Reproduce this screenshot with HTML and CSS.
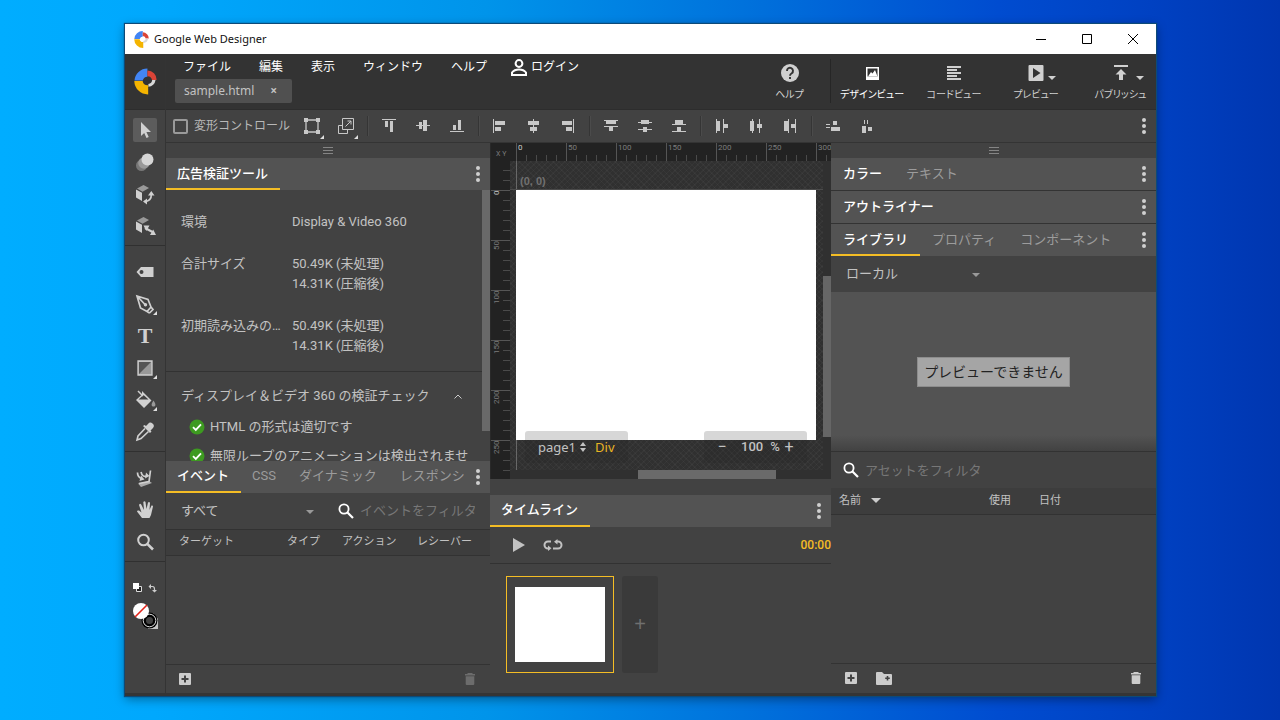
FILE: index.html
```html
<!DOCTYPE html>
<html lang="ja">
<head>
<meta charset="utf-8">
<title>Google Web Designer</title>
<link rel="stylesheet" href="styles.css">
</head>
<body>
<svg class="defs" aria-hidden="true">
  <symbol id="logo" viewBox="0 0 24 27">
    <path fill="#4285f4" d="M.5 12.500A13.500 13.500 0 0 1 14 0v8.500a5 5 0 0 0-4.800 4z"/>
    <path fill="#db4437" d="M14 2a9.500 9.500 0 0 1 9.500 10h-4.700A4.800 4.800 0 0 0 14 8z"/>
    <path fill="#d8d8d8" d="M22.500 12a8 8 0 0 1-7.500 7v-3a4.500 4.500 0 0 0 4-4z"/>
    <path fill="#f4b400" d="M.3 13H9a5.500 5.500 0 0 0 5.800 4.500V27A14.300 14.300 0 0 1 .3 13z"/>
  </symbol>
  <symbol id="more" viewBox="0 0 4 16"><circle cx="2" cy="2" r="2"/><circle cx="2" cy="8" r="2"/><circle cx="2" cy="14" r="2"/></symbol>
  <symbol id="grip" viewBox="0 0 10 7"><path d="M0 0h10v1H0zM0 3h10v1H0zM0 6h10v1H0z"/></symbol>
  <symbol id="search" viewBox="0 0 16 16"><circle cx="6" cy="6" r="4.600" fill="none" stroke="currentColor" stroke-width="1.800"/><path d="M9.500 9.500L15 15" stroke="currentColor" stroke-width="2.200"/></symbol>
  <symbol id="add" viewBox="0 0 12 12"><path fill-rule="evenodd" d="M1 0h10a1 1 0 0 1 1 1v10a1 1 0 0 1-1 1H1a1 1 0 0 1-1-1V1a1 1 0 0 1 1-1zm4 2.500V5H2.500v2H5v2.500h2V7h2.500V5H7V2.500z"/></symbol>
  <symbol id="trash" viewBox="0 0 10 12"><path d="M3 0h4l1 1h2v1.500H0V1h2zM.7 3.300h8.600V11a1 1 0 0 1-1 1H1.700a1 1 0 0 1-1-1z"/></symbol>
  <symbol id="check" viewBox="0 0 16 16"><circle cx="8" cy="8" r="7.500" fill="#3d9a20"/><path d="M4 8.200l2.800 2.700L12 5.300" fill="none" stroke="#fff" stroke-width="1.800"/></symbol>
  <symbol id="a-top" viewBox="0 0 14 14"><path d="M0 0h14v1H0zM3 2h3v6H3zM8 2h3v11H8z"/></symbol>
  <symbol id="a-mid" viewBox="0 0 14 14"><path d="M0 6h14v1H0zM3 3h3v7H3zM7 1h4v11H7z"/></symbol>
  <symbol id="a-bot" viewBox="0 0 14 14"><path d="M0 12h14v1H0zM3 6h3v5H3zM8 1h3v10H8z"/></symbol>
  <symbol id="a-left" viewBox="0 0 14 14"><path d="M0 0h1v14H0zM2 2h10v4H2zM2 8h6v4H2z"/></symbol>
  <symbol id="a-cen" viewBox="0 0 14 14"><path d="M6 0h1v14H6zM1 2h11v4H1zM3 8h7v4H3z"/></symbol>
  <symbol id="a-right" viewBox="0 0 14 14"><path d="M12 0h1v14h-1zM1 2h10v4H1zM5 8h6v4H5z"/></symbol>
  <symbol id="d-top" viewBox="0 0 14 14"><path d="M0 1h14v1H0zM2 1h10v4H2zM0 7h14v1H0zM5 7h4v5H5z"/></symbol>
  <symbol id="d-mid" viewBox="0 0 14 14"><path d="M0 3h14v1H0zM3 1h8v4H3zM0 10h14v1H0zM5 8h4v5H5z"/></symbol>
  <symbol id="d-bot" viewBox="0 0 14 14"><path d="M0 5h14v1H0zM3 1h8v4H3zM0 12h14v1H0zM5 8h4v4H5z"/></symbol>
  <symbol id="d-left" viewBox="0 0 14 14"><path d="M1 0h1v14H1zM1 2h4v10H1zM8 0h1v14H8zM8 5h5v4H8z"/></symbol>
  <symbol id="d-cen" viewBox="0 0 14 14"><path d="M3 0h1v14H3zM1 2h4v10H1zM10 0h1v14h-1zM8 5h5v4H8z"/></symbol>
  <symbol id="d-right" viewBox="0 0 14 14"><path d="M5 0h1v14H5zM1 2h4v10H1zM12 0h1v14h-1zM8 5h4v4H8z"/></symbol>
  <symbol id="s-ver" viewBox="0 0 14 14"><path d="M0 5h4v1H0zM0 8h4v1H0zM7 2h4v4H7zM5 8h9v4H5z"/></symbol>
  <symbol id="s-hor" viewBox="0 0 14 14"><path d="M4 1h1v4H4zM7 1h1v4H7zM2 7h4v7H2zM8 8h4v4H8z"/></symbol>
</svg>
<div class="desktop">
<main class="window">
  <header class="titlebar">
    <svg class="title-logo"><use href="#logo"/></svg>
    <span class="title">Google Web Designer</span>
    <div class="win-buttons">
      <button aria-label="最小化"><svg viewBox="0 0 12 12"><path d="M1 6.500h10"/></svg></button>
      <button aria-label="最大化"><svg viewBox="0 0 12 12"><path d="M1.500 1.500h9v9h-9z"/></svg></button>
      <button aria-label="閉じる"><svg viewBox="0 0 12 12"><path d="M1 1l10 10M11 1L1 11"/></svg></button>
    </div>
  </header>
  <div class="app">
    <aside class="side">
      <div class="brand"><svg><use href="#logo"/></svg></div>
      <div class="tools">
        <button class="active" aria-label="選択"><svg viewBox="0 0 24 24"><path d="M8 4v14l3.200-3 2.300 5 2.200-1-2.300-5H18z"/></svg></button>
        <button aria-label="モーション"><svg viewBox="0 0 24 24"><circle cx="8.500" cy="15.500" r="5.500" fill="#777"/><circle cx="11" cy="13" r="5.800" fill="#999"/><circle cx="14.500" cy="9.500" r="6" fill="#d6d6d6"/></svg></button>
        <button aria-label="3D 回転"><svg viewBox="0 0 24 24"><path fill="#999" d="M4 6.500L10.500 3 16 6l-6.500 3.700z"/><path d="M3 7.500l6 3.200V19l-6-3.500z"/><path d="M11.500 19.500c4.500 0 7-2.500 6.800-7" fill="none" stroke="currentColor" stroke-width="1.700"/><path d="M18.300 9l3.200 4.500h-6.500zM14 16.500v6l-4-3z"/></svg></button>
        <button aria-label="3D 移動"><svg viewBox="0 0 24 24"><path fill="#999" d="M4 6.500L10.500 3 16 6l-6.500 3.700z"/><path d="M3 7.500l6 3.200V19l-6-3.500z"/><path d="M12 14l8.500 4.500" stroke="currentColor" stroke-width="2"/><path d="M10.500 11.500h6l-3.200 5.500zM23 21h-6l3.200-5.500z"/></svg></button>
      </div>
      <div class="tools">
        <button aria-label="タグ"><svg viewBox="0 0 24 24"><path fill-rule="evenodd" d="M8 7h12.500v10H8l-4.500-5zM8.500 10a2 2 0 1 0 0 4 2 2 0 0 0 0-4z"/></svg></button>
        <button class="sub" aria-label="ペン"><svg viewBox="0 0 24 24"><path d="M4 4l11 3.500 3 7.500-4 4.500-6.500-3.500zM5 5l7 7.500M14 19.500l2.500 1.500M18 15l2 2.500-3.500 3.500" fill="none" stroke="currentColor" stroke-width="1.700"/><circle cx="12.500" cy="12.800" r="1.700"/></svg></button>
        <button class="glyph" aria-label="テキスト">T</button>
        <button class="sub" aria-label="図形"><svg viewBox="0 0 24 24"><path fill="#999" d="M5 5h14v14H5z"/><path fill="#555" d="M6 6h12L6 18z"/><path d="M5 5h14v14H5z" fill="none" stroke="currentColor" stroke-width="1.300"/></svg></button>
        <button class="sub" aria-label="塗りつぶし"><svg viewBox="0 0 24 24"><path d="M9 3l9.500 9.500-7.500 7.500L3 12l6-5.500zM5.500 11.500h10L10.500 7z" fill-rule="evenodd"/><path d="M5 3l5 5" stroke="currentColor" stroke-width="1.500"/><path fill="#999" d="M20.500 12.500c3 4 2 6 0 6s-3-2 0-6z"/></svg></button>
        <button aria-label="スポイト"><svg viewBox="0 0 24 24"><path d="M13 6l2-2a3 3 0 0 1 5 4l-2.500 2.500 1 1-1.500 1.500-7-7L11.500 5z"/><path d="M12 8.500l-7 7.500L4 20l4-1.500 7.500-7" fill="none" stroke="currentColor" stroke-width="1.600"/></svg></button>
      </div>
      <div class="tools">
        <button aria-label="3D ステージ回転"><svg viewBox="0 0 24 24"><path fill="#aaa" d="M5 17.500l11-2.500 3 2-11 4z"/><path d="M17.500 4.500l-1.500 11-10 2M4.500 6.500c0 3 1 5 4 6M8 6c1 4 3 5 6 4" fill="none" stroke="currentColor" stroke-width="1.700"/><path d="M8 9.500l3.500 4-5 1.500zM13 6.500l3.500 3.500-4.500 2.500z"/></svg></button>
        <button aria-label="手のひら"><svg viewBox="0 0 24 24"><path d="M9 20L4 13.500q0-1.500 2-1l2.500 2L6 7q1-2 2.200-.5L11 12 10.300 4q1.300-1.500 2.200 0L13.500 11l1.500-6.500q1.500-1 2 .5L16.500 12l2-4.500q1.500-.5 1.500 1L18 17l-1.500 3z"/></svg></button>
        <button aria-label="ズーム"><svg viewBox="0 0 24 24"><circle cx="10.500" cy="10" r="5.300" fill="none" stroke="currentColor" stroke-width="2"/><path d="M14.300 13.800l5.700 5.700" stroke="currentColor" stroke-width="2.600"/></svg></button>
      </div>
      <div class="swatches">
        <svg viewBox="0 0 26 48"><path fill="#222" stroke="#ddd" d="M4.500 4.500h5v5h-5z"/><path fill="#fff" d="M1 1h6v6H1z"/><path d="M18 4.500h2.500q2 0 2 2.500v1.500" fill="none" stroke="#ccc" stroke-width="1.200"/><path fill="#ccc" d="M19 2v5l-2.500-2.500zM20 8h5l-2.500 2.500z"/><path fill="#c4c4c4" d="M21 31l5 6v10H16z"/><circle cx="17.500" cy="38.500" r="8" fill="#000"/><circle cx="17.500" cy="38.500" r="6.300" fill="none" stroke="#ddd"/><circle cx="17.500" cy="38.500" r="3.500" fill="#424242"/><circle cx="9" cy="29" r="8" fill="#fff"/><path d="M3 35L15 23" stroke="#e2231a" stroke-width="1.600"/></svg>
      </div>
    </aside>
    <div class="main">
      <div class="header">
        <div class="header-left">
          <nav class="menu">
            <button>ファイル</button><button>編集</button><button>表示</button><button>ウィンドウ</button><button>ヘルプ</button>
            <button class="login"><svg viewBox="0 0 16 17"><circle cx="8" cy="4.500" r="3.400"/><path d="M1 16v-2.500C2.500 11.500 5 10.500 8 10.500s5.500 1 7 3V16z"/></svg>ログイン</button>
          </nav>
          <div class="file-tab"><span>sample.html</span><button aria-label="閉じる">×</button></div>
        </div>
        <div class="actions">
          <button class="act-help"><svg viewBox="0 0 20 20"><circle cx="10" cy="10" r="9"/><path d="M7 8a3 3 0 1 1 4.800 2.200Q10 11.300 10 12.700M10 14v2" fill="none" stroke="#333" stroke-width="1.900"/></svg>ヘルプ</button>
          <button class="act on"><svg viewBox="0 0 20 20"><path d="M4 4h13v13H4z"/><path fill="#333" d="M5.500 5.500h10v8h-10z"/><path d="M6 13.500l3-4.500 1.500 1.500L13 7l2.500 6.500z"/></svg>デザインビュー</button>
          <button class="act"><svg viewBox="0 0 20 20"><path d="M3 3h14v2H3zM3 6h10v2H3zM3 9h14v2H3zM3 12h10v2H3zM3 15h14v2H3z"/></svg>コードビュー</button>
          <button class="act drop"><svg viewBox="0 0 20 20"><path fill-rule="evenodd" d="M3.500 2h13q1 0 1 1v14q0 1-1 1h-13q-1 0-1-1V3q0-1 1-1zM7 5v10l7.500-5z"/></svg>プレビュー</button>
          <button class="act drop"><svg viewBox="0 0 20 20"><path d="M3 2h14v2H3zM10 6l5.500 5.500H12V17H8v-5.500H4.500z"/></svg>パブリッシュ</button>
        </div>
      </div>
      <div class="toolbar">
        <label class="transform"><input type="checkbox">変形コントロール</label>
        <div class="group">
          <button class="sub" aria-label="枠"><svg class="i18" viewBox="0 0 18 18"><path d="M3 3h12v12H3z" fill="none" stroke="currentColor" stroke-width="1.300"/><path d="M1 1h4v4H1zM13 1h4v4h-4zM1 13h4v4H1zM13 13h4v4h-4z"/></svg></button>
          <button class="sub" aria-label="拡大"><svg class="i18" viewBox="0 0 18 18"><path d="M5.500 1.500h11v11h-11zM5.500 8.500h-4v8h9v-4M8.500 9.500L14 4M10.500 4H14v3.500" fill="none" stroke="currentColor"/></svg></button>
        </div>
        <div class="group">
          <button aria-label="上揃え"><svg><use href="#a-top"/></svg></button><button aria-label="上下中央"><svg><use href="#a-mid"/></svg></button><button aria-label="下揃え"><svg><use href="#a-bot"/></svg></button>
        </div>
        <div class="group">
          <button aria-label="左揃え"><svg><use href="#a-left"/></svg></button><button aria-label="左右中央"><svg><use href="#a-cen"/></svg></button><button aria-label="右揃え"><svg><use href="#a-right"/></svg></button>
        </div>
        <div class="group">
          <button aria-label="上端分布"><svg><use href="#d-top"/></svg></button><button aria-label="上下分布"><svg><use href="#d-mid"/></svg></button><button aria-label="下端分布"><svg><use href="#d-bot"/></svg></button>
        </div>
        <div class="group">
          <button aria-label="左端分布"><svg><use href="#d-left"/></svg></button><button aria-label="左右分布"><svg><use href="#d-cen"/></svg></button><button aria-label="右端分布"><svg><use href="#d-right"/></svg></button>
        </div>
        <div class="group">
          <button aria-label="縦の間隔"><svg><use href="#s-ver"/></svg></button><button aria-label="横の間隔"><svg><use href="#s-hor"/></svg></button>
        </div>
        <button class="more" aria-label="その他"><svg><use href="#more"/></svg></button>
      </div>
      <div class="workspace">
        <section class="left">
          <div class="grip"><svg><use href="#grip"/></svg></div>
          <div class="tabs"><button class="tab on">広告検証ツール</button><button class="more" aria-label="その他"><svg><use href="#more"/></svg></button></div>
          <div class="validator">
            <div class="validator-body">
              <dl class="facts">
                <dt>環境</dt><dd>Display &amp; Video 360</dd>
                <dt>合計サイズ</dt><dd>50.49K (未処理)<br>14.31K (圧縮後)</dd>
                <dt>初期読み込みの...</dt><dd>50.49K (未処理)<br>14.31K (圧縮後)</dd>
              </dl>
              <div class="checks">
                <button class="checks-head"><span>ディスプレイ＆ビデオ 360 の検証チェック</span><svg viewBox="0 0 8 5"><path d="M.5 4.500L4 1l3.500 3.500"/></svg></button>
                <ul>
                  <li><svg><use href="#check"/></svg>HTML の形式は適切です</li>
                  <li><svg><use href="#check"/></svg>無限ループのアニメーションは検出されませ</li>
                </ul>
              </div>
            </div>
            <div class="vscroll"><div class="thumb-left"></div></div>
          </div>
          <div class="tabs"><div class="tab-strip"><button class="tab on">イベント</button><button class="tab">CSS</button><button class="tab">ダイナミック</button><button class="tab">レスポンシ</button></div><button class="more" aria-label="その他"><svg><use href="#more"/></svg></button></div>
          <div class="filter">
            <span class="select"><select aria-label="イベントの種類"><option>すべて</option></select></span>
            <label class="find"><svg><use href="#search"/></svg><input type="text" placeholder="イベントをフィルタ" aria-label="イベントをフィルタ"></label>
          </div>
          <table class="events"><thead><tr><th class="c-target">ターゲット</th><th class="c-type">タイプ</th><th class="c-action">アクション</th><th>レシーバー</th></tr></thead></table>
          <div class="fill"></div>
          <div class="foot"><button aria-label="追加"><svg class="i12"><use href="#add"/></svg></button><button class="end dim" aria-label="削除"><svg class="trash"><use href="#trash"/></svg></button></div>
        </section>
        <section class="center">
          <div class="canvas">
            <div class="ruler-x"><span class="xy">X Y</span><span class="zero">0</span><span>50</span><span>100</span><span>150</span><span>200</span><span>250</span><span>300</span></div>
            <div class="ruler-y"><span class="zero">0</span><span>50</span><span>100</span><span>150</span><span>200</span><span>250</span></div>
            <div class="stage">
              <div class="guide-x"></div><div class="guide-y"></div>
              <span class="origin">(0, 0)</span>
              <div class="artboard"></div>
              <div class="pill page"><span>page1</span><svg viewBox="0 0 6 10"><path d="M3 0l3 4H0zM3 10l3-4H0z"/></svg><span class="gold">Div</span></div>
              <div class="pill zoom"><button aria-label="縮小">−</button><span class="pct">100</span><span>%</span><button aria-label="拡大">+</button></div>
            </div>
            <div class="stage-v"><div></div></div>
            <div class="stage-h"><div></div></div>
          </div>
          <div class="timeline">
            <div class="tabs"><button class="tab on">タイムライン</button><button class="more" aria-label="その他"><svg><use href="#more"/></svg></button></div>
            <div class="player">
              <button aria-label="再生"><svg class="play" viewBox="0 0 12 14"><path d="M0 0l12 7-12 7z"/></svg></button>
              <button aria-label="ループ"><svg class="loop" viewBox="0 0 20 12"><path d="M8 2.500H5a3.500 3.500 0 0 0 0 7h1.500M10 9.500h5a3.500 3.500 0 0 0 0-7h-1.500" fill="none" stroke="currentColor" stroke-width="2"/><path d="M5 6.500V12l3.500-2.700zM14.500 0v5.500L11 2.700z"/></svg></button>
              <span class="time">00:00</span>
            </div>
            <div class="frames"><button class="frame" aria-label="page1"><span></span></button><button class="new-frame" aria-label="ページを追加">+</button></div>
          </div>
        </section>
        <section class="right">
          <div class="grip"><svg><use href="#grip"/></svg></div>
          <div class="tabs line"><button class="tab head">カラー</button><button class="tab">テキスト</button><button class="more" aria-label="その他"><svg><use href="#more"/></svg></button></div>
          <div class="tabs line"><button class="tab head">アウトライナー</button><button class="more" aria-label="その他"><svg><use href="#more"/></svg></button></div>
          <div class="tabs"><button class="tab on">ライブラリ</button><button class="tab">プロパティ</button><button class="tab">コンポーネント</button><button class="more" aria-label="その他"><svg><use href="#more"/></svg></button></div>
          <div class="local"><span class="select"><select aria-label="ライブラリ"><option>ローカル</option></select></span></div>
          <div class="preview"><span>プレビューできません</span></div>
          <label class="find assets"><svg><use href="#search"/></svg><input type="text" placeholder="アセットをフィルタ" aria-label="アセットをフィルタ"></label>
          <table class="files"><thead><tr><th class="c-name">名前<i></i></th><th class="c-use">使用</th><th>日付</th></tr></thead></table>
          <div class="fill"></div>
          <div class="foot"><button aria-label="追加"><svg class="i12"><use href="#add"/></svg></button><button aria-label="新しいフォルダ"><svg class="folder" viewBox="0 0 16 13"><path fill-rule="evenodd" d="M1 0h5l2 2h7q1 0 1 1v9q0 1-1 1H1q-1 0-1-1V1q0-1 1-1zm9.700 4v1.500H9.200v1.600h1.500v1.500h1.600V7.100h1.500V5.500h-1.500V4z"/></svg></button><button class="end" aria-label="削除"><svg class="trash"><use href="#trash"/></svg></button></div>
        </section>
      </div>
    </div>
  </div>
</main>
</div>
</body>
</html>
```
FILE: styles.css
```css
* { box-sizing: border-box; }
body {
  margin: 0;
  font: 13px/20px Roboto, "Noto Sans CJK JP", sans-serif;
  color: #c2c2c2;
}
button, input, select { font: inherit; color: inherit; background: none; border: 0; padding: 0; margin: 0; }
button { display: flex; align-items: center; justify-content: center; white-space: nowrap; }
svg { display: block; flex: none; fill: currentColor; }
.defs { position: absolute; width: 0; height: 0; }

.desktop {
  min-height: 100vh;
  display: flex;
  padding: 24px 124px 25px 125px;
  background: linear-gradient(90deg, #00adff 0, #00a8fd 12%, #0094ea 38%, #0072dc 58%, #004cd0 78%, #0041c2 90%, #0036b0 100%);
}
.window {
  flex: 1;
  min-width: 0;
  display: flex;
  flex-direction: column;
  background: #424242;
  box-shadow: 0 0 1px 1px #0d4a78, 0 3px 10px rgba(0, 0, 0, .4);
}

.titlebar { display: flex; align-items: center; height: 30px; padding-left: 9px; background: #fff; color: #111; }
.title-logo { width: 15px; height: 17px; margin-right: 5px; }
.title { font: 11px/20px "Noto Sans", sans-serif; }
.win-buttons { display: flex; margin-left: auto; }
.win-buttons button { width: 46px; height: 28px; }
.win-buttons svg { width: 12px; height: 12px; fill: none; stroke: #000; }

.app { flex: 1; display: flex; min-height: 0; border-bottom: 3px solid #353535; }

/* tool column */
.side { flex: none; width: 41px; border-right: 1px solid #343434; }
.brand { height: 56px; display: flex; align-items: center; justify-content: center; background: #333; border-bottom: 1px solid #2d2d2d; }
.brand svg { width: 23px; height: 27px; }
.tools { display: flex; flex-direction: column; align-items: center; padding: 10px 0 3px; border-bottom: 1px solid #303030; color: #d0d0d0; }
.brand + .tools { padding-top: 4px; }
.tools button { width: 24px; height: 24px; margin: 4px 0; border-radius: 2px; }
.tools .active { background: #5c5c5c; }
.tools svg { width: 24px; height: 24px; }
.tools .glyph { font: bold 22px/24px "Liberation Serif", serif; }
.sub { position: relative; }
.sub::after { content: ""; position: absolute; right: 0; bottom: 0; border: 2px solid; border-color: transparent #e0e0e0 #e0e0e0 transparent; }
.tools .sub::after { right: 0; bottom: 1px; }
.swatches { padding: 20px 7px; }
.swatches svg { width: 26px; height: 48px; }

/* header */
.main { flex: 1; min-width: 0; display: flex; flex-direction: column; }
.header { display: flex; height: 56px; background: #333; border-bottom: 1px solid #2d2d2d; }
.header-left { flex: 1; padding: 3px 0 0 9px; }
.menu { display: flex; gap: 28px; height: 20px; padding-left: 8px; color: #fff; font-size: 12px; }
.menu .login { gap: 4px; margin-left: -4px; }
.login svg { width: 16px; height: 17px; fill: none; stroke: currentColor; stroke-width: 2; }
.file-tab { display: inline-flex; align-items: center; gap: 12px; height: 24px; margin-top: 2px; padding: 0 11px 0 9px; border-radius: 2px; background: #505050; font: 12px/24px "Noto Sans", sans-serif; }
.file-tab button { width: 15px; font-weight: bold; font-size: 12px; }
.actions { display: flex; height: 44px; margin-top: 5px; font-size: 10px; font-feature-settings: "palt"; color: #d0d0d0; }
.actions button { flex-direction: column; gap: 3px; line-height: 18px; justify-content: flex-start; padding-top: 4px; position: relative; }
.actions svg { width: 20px; height: 20px; }
.actions .act-help { width: 82px; border-right: 1px solid #262626; }
.actions .act { width: 82px; }
.actions .act.on { color: #fff; }
.actions .drop:last-child { width: 79px; padding-left: 8px; }
.drop::after { content: ""; position: absolute; left: 53px; top: 17px; border: 4px solid transparent; border-top-color: currentColor; border-bottom: 0; }
.drop:last-child::after { left: 59px; }

/* toolbar */
.toolbar { display: flex; align-items: center; height: 33px; border-bottom: 1px solid #343434; color: #c8c8c8; }
.transform { display: flex; align-items: center; gap: 6px; padding: 0 5px 0 7px; font-size: 12px; white-space: nowrap; color: #b8b8b8; }
.transform input { appearance: none; width: 15px; height: 15px; border: 2px solid #9a9a9a; border-radius: 2px; }
.group { display: flex; align-items: center; }
.group + .group::before { content: ""; width: 1px; height: 20px; margin: 0 4px; background: #353535; box-shadow: 1px 0 #4b4b4b; }
.group button { width: 34px; height: 26px; }
.group svg { width: 14px; height: 14px; }
.group .i18 { width: 18px; height: 18px; }
.group .sub::after { right: 5px; bottom: 0; }
.more { width: 24px; height: 32px; margin-left: auto; flex: none; color: #d0d0d0; }
.more svg { width: 4px; height: 16px; }

/* shared panel parts */
.workspace { flex: 1; display: flex; min-height: 0; }
.left, .right { flex: none; display: flex; flex-direction: column; min-width: 0; }
.left { width: 324px; }
.right { width: 325px; }
.center { flex: 1; min-width: 0; display: flex; flex-direction: column; }
.grip { height: 15px; display: flex; align-items: center; justify-content: center; color: #858585; }
.grip svg { width: 10px; height: 7px; }
.tabs { display: flex; height: 32px; background: #535353; flex: none; }
.tabs.line { height: 33px; border-bottom: 1px solid #333; }
.tab { padding: 1px 12px 0 11px; color: #9c9c9c; border-bottom: 2px solid transparent; }
.tab.on, .tab.head { color: #fff; font-weight: 500; }
.tab.on { border-bottom-color: #f4bd25; }
.tab-strip { display: flex; min-width: 0; overflow: hidden; }
.tab-strip .tab:last-child { padding-right: 0; }
.fill { flex: 1; }
.foot { display: flex; align-items: center; gap: 19px; height: 30px; padding: 0 15px 0 14px; border-top: 1px solid #333; color: #ccc; }
.foot .end { margin-left: auto; }
.foot .dim { color: #6c6c6c; }
.i12 { width: 12px; height: 12px; }
.trash { width: 10px; height: 12px; }
.folder { width: 16px; height: 13px; }
.select { position: relative; display: block; }
.select select { appearance: none; width: 100%; height: 24px; outline: 0; }
.select::after { content: ""; position: absolute; right: 0; top: 11px; border: 4px solid transparent; border-top-color: #999; border-bottom: 0; pointer-events: none; }
.find { display: flex; align-items: center; color: #fff; }
.find svg { width: 16px; height: 16px; }
.find input { flex: 1; min-width: 0; height: 24px; outline: 0; }
.find input::placeholder { color: #777; }
table { border-collapse: collapse; table-layout: fixed; width: 100%; font-size: 11px; background: #3d3d3d; }
th { height: 26px; padding: 0; text-align: left; font-weight: 400; white-space: nowrap; border-bottom: 1px solid #323232; }

/* left panel */
.validator { flex: 1 1 270px; min-height: 0; display: flex; overflow: hidden; }
.validator-body { flex: 1; min-width: 0; height: 0; }
.facts { display: grid; grid-template-columns: 100px 1fr; gap: 22px 11px; margin: 0; padding: 22px 15px 15px; border-bottom: 1px solid #323232; }
.facts dt { overflow: hidden; white-space: nowrap; text-overflow: ellipsis; }
.facts dd { margin: 0; }
.checks { padding: 14px 0 0 15px; }
.checks-head { width: 281px; justify-content: space-between; }
.checks-head svg { width: 8px; height: 5px; fill: none; stroke: #ccc; }
.checks ul { list-style: none; margin: 0; padding: 6px 0 0 8px; }
.checks li { display: flex; align-items: center; gap: 5px; height: 29px; white-space: nowrap; }
.checks li svg { width: 16px; height: 16px; }
.vscroll { width: 8px; }
.thumb-left { height: 89%; background: #696969; }
.filter { display: flex; align-items: center; height: 36px; padding: 0 15px; flex: none; }
.filter .select { width: 133px; margin-right: 24px; }
.filter .find { flex: 1; min-width: 0; gap: 6px; }
.events { border-top: 1px solid #323232; }
.events .c-target { width: 121px; padding-left: 13px; }
.events .c-type { width: 55px; }
.events .c-action { width: 75px; }
.left .fill { flex: 0 1 108px; }
.left .foot { height: 29px; padding-left: 13px; }

/* canvas */
.canvas { flex: 1; min-height: 0; display: grid; grid-template: 18px 1fr 9px / 19px 1fr 8px; margin-bottom: 16px; background: #303030; border-left: 1px solid #292929; }
.ruler-x, .ruler-y { background: #222; color: #7c7c7c; font-size: 8px; line-height: 10px; overflow: hidden; }
.ruler-x { grid-column: 1 / -1; display: flex; background: repeating-linear-gradient(90deg, #4a4a4a 0 1px, transparent 1px 10px) 25px 12px / 100% 6px no-repeat #222; }
.ruler-x span { flex: none; width: 50px; padding-left: 1px; border-left: 1px solid #555; }
.ruler-x .xy { width: 25px; padding: 6px 0 0 5px; border: 0; font-size: 7px; background: #222; }
.ruler-y { grid-row: 2 / 4; height: 0; min-height: 100%; padding-top: 29px; display: flex; flex-direction: column; background: repeating-linear-gradient(180deg, #4a4a4a 0 1px, transparent 1px 10px) 12px 9px / 7px 100% no-repeat #222; }
.ruler-y span { flex: none; width: 19px; height: 50px; padding-right: 1px; border-bottom: 1px solid #555; writing-mode: vertical-rl; transform: rotate(180deg); text-align: right; }
.ruler-x .zero, .ruler-y .zero { color: #ccc; }
.stage { position: relative; overflow: hidden; min-width: 0; background: repeating-linear-gradient(45deg, rgba(255, 255, 255, .03) 0 1px, transparent 1px 4px), repeating-linear-gradient(-45deg, rgba(255, 255, 255, .03) 0 1px, transparent 1px 4px), #303030; }
.guide-x { position: absolute; left: 6px; top: 0; bottom: 0; width: 1px; background: #686868; }
.guide-y { position: absolute; top: 28px; left: 0; right: 0; height: 1px; background: #4b4b4b; }
.origin { position: absolute; left: 10px; top: 10px; font: bold 11px/20px "Liberation Sans", sans-serif; color: #707070; }
.artboard { position: absolute; left: 6px; top: 29px; width: 300px; height: 250px; background: #fff; }
.pill { position: absolute; bottom: 7px; height: 32px; width: 103px; display: flex; align-items: center; border-radius: 3px; background: rgba(34, 34, 34, .18); font: 13px/32px "Noto Sans", sans-serif; }
.page { left: 15px; padding-left: 13px; gap: 4px; }
.page svg { width: 6px; height: 10px; }
.gold { color: #e9b423; margin-left: 5px; }
.zoom { right: 16px; padding: 0 13px; font: 500 13px/32px Roboto, sans-serif; }
.zoom button { width: 10px; font-size: 16px; font-weight: 400; }
.zoom .pct { margin: 0 7px 0 14px; }
.zoom button:last-child { margin-left: auto; }
.stage-v { padding-top: 115px; }
.stage-v div { height: 161px; background: #666; }
.stage-h { grid-column: 2 / -1; }
.stage-h div { width: 43%; height: 9px; margin-left: 40%; background: #6a6a6a; }

/* timeline */
.timeline { flex: none; }
.player { display: flex; align-items: center; gap: 18px; height: 37px; padding-left: 23px; border-bottom: 1px solid #323232; }
.play { width: 12px; height: 14px; }
.loop { width: 20px; height: 12px; }
.time { margin-left: auto; color: #f4bd25; font-size: 12px; font-weight: 500; }
.frames { display: flex; gap: 8px; padding: 12px 16px 20px; }
.frame { width: 108px; height: 97px; border: 1px solid #f4bd25; }
.frame span { width: 90px; height: 75px; background: #fff; }
.new-frame { width: 36px; border-radius: 3px; background: #3a3a3a; color: #707070; font: 20px/20px "Liberation Sans", sans-serif; }

/* right panel */
.right .tab { padding-left: 12px; }
.local { padding: 6px 176px 6px 15px; height: 36px; }
.preview { flex: 1 1 160px; display: flex; align-items: center; justify-content: center; background: linear-gradient(#535353 90%, #424242); border-bottom: 1px solid #323232; }
.preview span { padding: 4px 6px; border: 1px solid #8d8d8d; background: #a5a5a5; color: #222; font-size: 14px; }
.assets { height: 36px; padding: 0 12px; gap: 6px; }
.files .c-name { width: 158px; padding-left: 8px; }
.files .c-use { width: 50px; }
.files i { display: inline-block; margin: 0 0 1px 10px; border: 5px solid transparent; border-top-color: #ccc; border-bottom: 0; }
.right .fill { flex: 1 1 148px; }
```
